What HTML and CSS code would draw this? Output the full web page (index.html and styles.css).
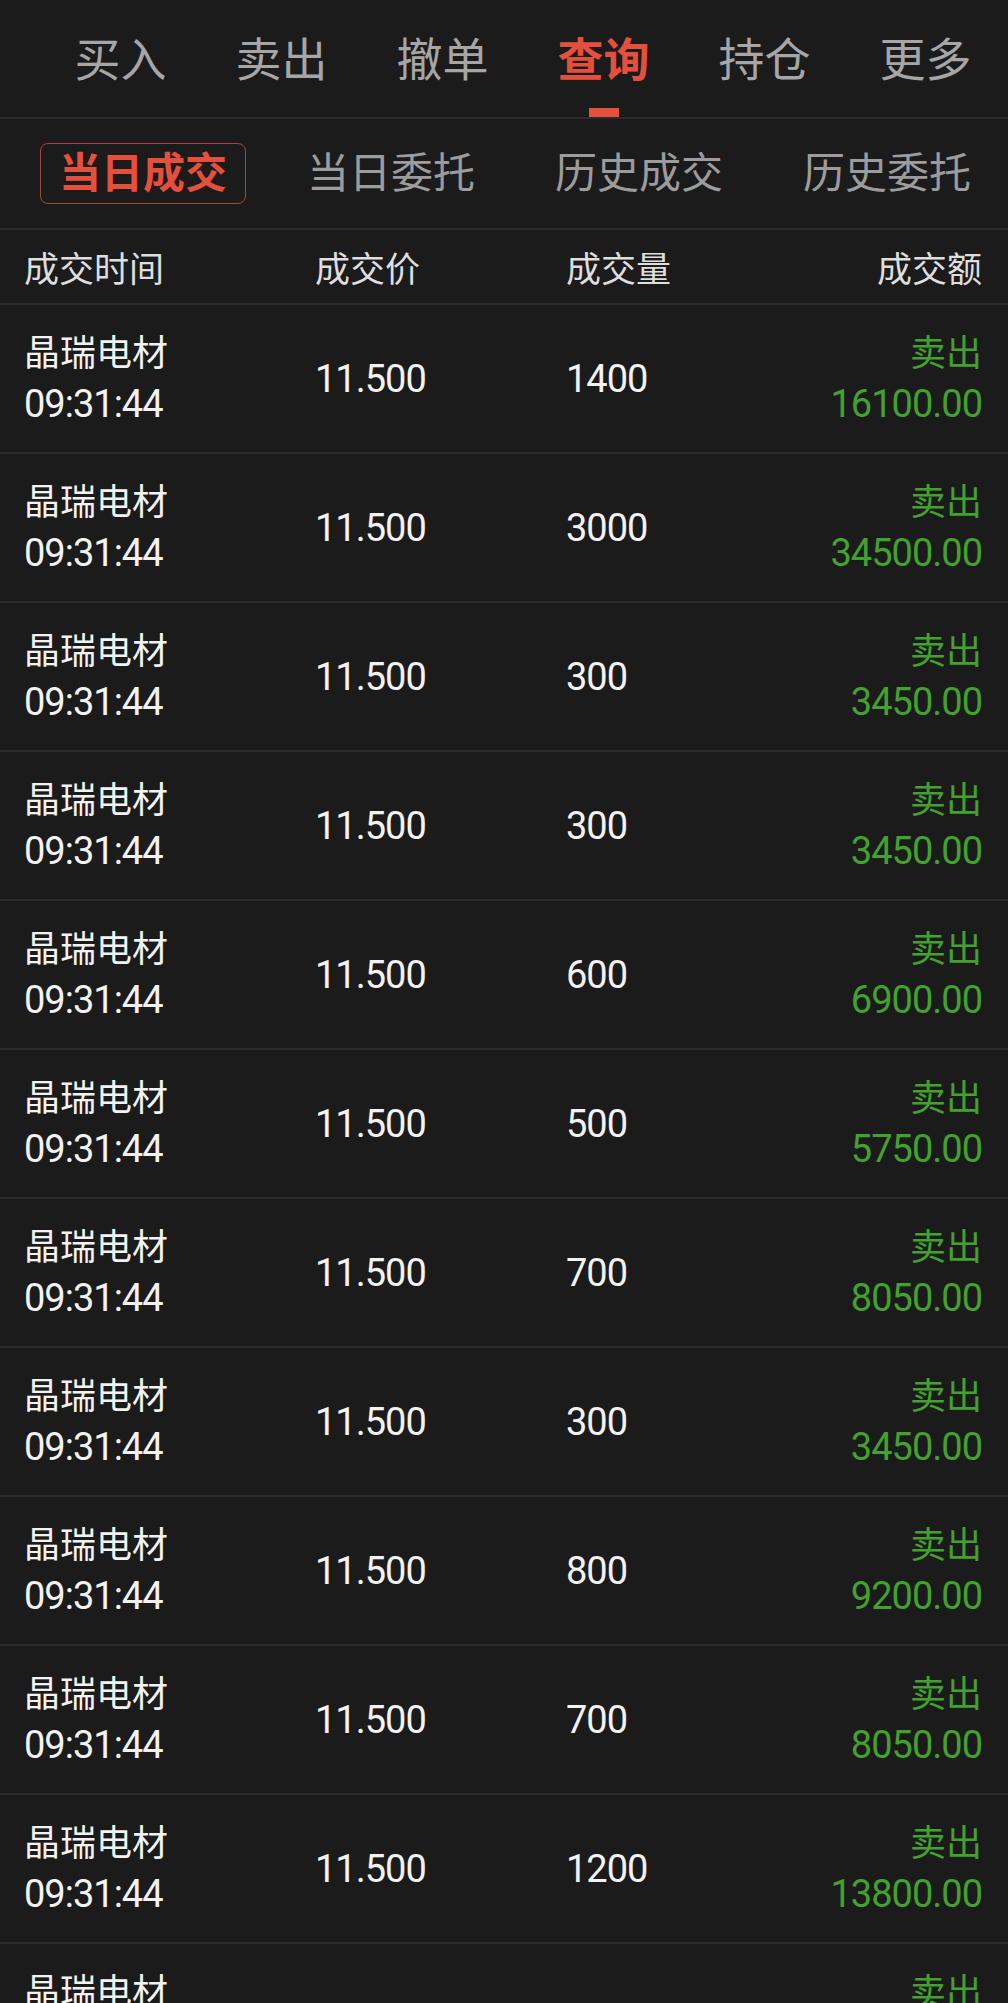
FILE: index.html
```html
<!DOCTYPE html>
<html lang="zh-CN">
<head>
  <meta charset="UTF-8">
  <title>查询 - 当日成交</title>
  <link rel="stylesheet" href="styles.css">
</head>
<body>

<!-- top tabs -->
<div class="nav">
  <div class="nav-item">买入</div>
  <div class="nav-item">卖出</div>
  <div class="nav-item">撤单</div>
  <div class="nav-item active">查询<span class="bar"></span></div>
  <div class="nav-item">持仓</div>
  <div class="nav-item">更多</div>
</div>

<!-- sub tabs -->
<div class="subtabs">
  <div class="sub"><span class="sub-box active">当日成交</span></div>
  <div class="sub"><span class="sub-box">当日委托</span></div>
  <div class="sub"><span class="sub-box">历史成交</span></div>
  <div class="sub"><span class="sub-box">历史委托</span></div>
</div>

<div class="head">
  <div>成交时间</div>
  <div>成交价</div>
  <div>成交量</div>
  <div class="right">成交额</div>
</div>

<div id="rows"></div>

<script>
  const deals = [
    [1400, "16100.00"], [3000, "34500.00"], [300, "3450.00"], [300, "3450.00"],
    [600, "6900.00"], [500, "5750.00"], [700, "8050.00"], [300, "3450.00"],
    [800, "9200.00"], [700, "8050.00"], [1200, "13800.00"], [300, "3450.00"]
  ];

  const box = document.getElementById("rows");
  deals.forEach(d => {
    const row = document.createElement("div");
    row.className = "row";
    row.innerHTML =
      `<div class="two"><div>晶瑞电材</div><div class="num">09:31:44</div></div>` +
      `<div class="num">11.500</div>` +
      `<div class="num">${d[0]}</div>` +
      `<div class="two right sell"><div>卖出</div><div class="num">${d[1]}</div></div>`;
    box.appendChild(row);
  });
</script>

</body>
</html>
```

FILE: styles.css
```css
body { margin: 0; background: #1b1b1c; color: #f2f2f2; font-family: Roboto, "Noto Sans CJK SC", sans-serif; overflow: hidden; }

.nav { display: grid; grid-template-columns: repeat(6, 161px); padding-left: 40px; height: 117px; border-bottom: 2px solid #2b2b2c; }
.nav-item { display: flex; flex-direction: column; align-items: center; padding-top: 32px; font-size: 46px; line-height: 56px; color: #a6a6a6; }
.nav-item.active { color: #e5503c; font-weight: bold; }
.bar { display: block; width: 30px; height: 9px; margin-top: 20px; background: #e5503c; }

.subtabs { display: grid; grid-template-columns: repeat(4, 248px); padding-left: 19px; height: 109px; align-items: center; border-bottom: 2px solid #2b2b2c; }
.sub { display: flex; justify-content: center; }
.sub-box { font-size: 42px; line-height: 59px; padding: 0 18px; border: 1px solid transparent; border-radius: 8px; color: #9c9c9c; white-space: nowrap; }
.sub-box.active { color: #e5503c; font-weight: bold; border-color: #a5463b; }

.head { display: grid; grid-template-columns: 291px 251px 1fr auto; padding: 0 26px 0 24px; height: 73px; align-items: center; font-size: 35px; color: #dedede; border-bottom: 2px solid #2b2b2c; }

.row { display: grid; grid-template-columns: 291px 251px 1fr auto; padding: 0 26px 0 24px; height: 147px; align-items: center; font-size: 36px; border-bottom: 2px solid #2b2b2c; }
.two { line-height: 50px; }
.num { font-size: 38px; letter-spacing: -1px; }
.right { text-align: right; }
.sell { color: #43a12d; }
```
